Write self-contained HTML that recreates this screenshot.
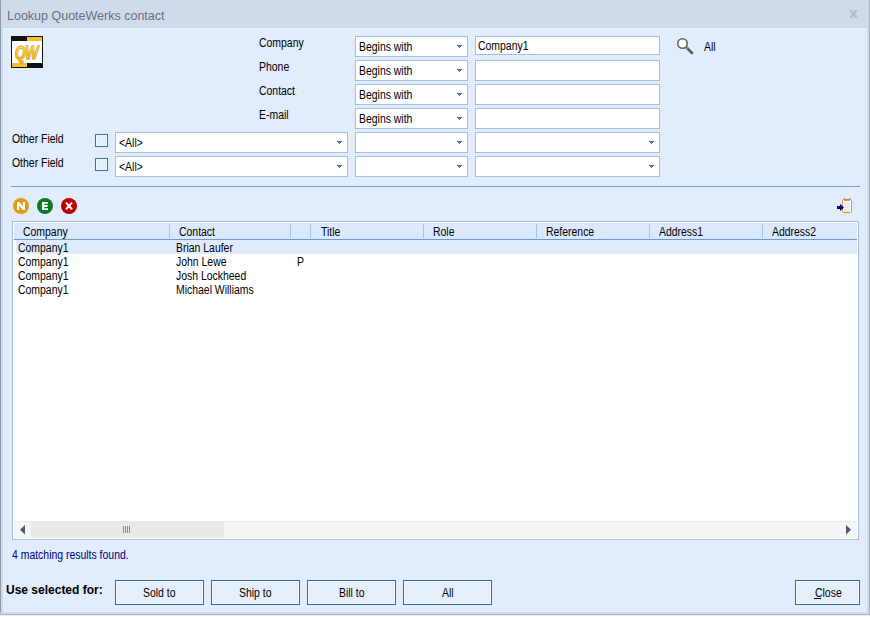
<!DOCTYPE html>
<html><head><meta charset="utf-8">
<style>
*{margin:0;padding:0;box-sizing:border-box}
html,body{width:870px;height:617px;overflow:hidden;background:#fff}
body{position:relative;font-family:"Liberation Sans",sans-serif;font-size:12px;line-height:14px;color:#000}
.a{position:absolute;white-space:nowrap}
.t{position:absolute;white-space:nowrap;font-size:12px;line-height:14px;transform:scaleX(0.87);transform-origin:0 0}
.r{position:absolute}
.sel{position:absolute;background:#fff;border:1px solid #A7BEDD;height:21px}
.arr{position:absolute;top:8px;width:5px;height:3px;background:linear-gradient(#3F6DAE,#3F6DAE) 0 0/5px 1px no-repeat,linear-gradient(#3F6DAE,#3F6DAE) 1px 1px/3px 1px no-repeat,linear-gradient(#5A80B8,#5A80B8) 2px 2px/1px 1px no-repeat}
.inp{position:absolute;background:#fff;border:1px solid #A7BEDD;height:21px}
.cb{position:absolute;width:13px;height:13px;border:1px solid #3670B2;background:#E3EEFB;box-shadow:inset 0 0 0 1px #F2F7FE}
.btn{position:absolute;top:580px;height:25px;border:1px solid #3569A4;background:#E5EFFC;box-shadow:inset 0 0 0 1px #F6FAFF}
.sep{position:absolute;top:224px;width:1px;height:14px;background:#A4C4EC}
</style></head><body>
<!-- window frame -->
<div class="r" style="left:0;top:0;width:870px;height:615px;background:#CFDBEA"></div>
<div class="r" style="left:3px;top:28px;width:864px;height:584px;background:#E1ECFC"></div>
<div class="r" style="left:1px;top:27px;width:868px;height:1px;background:#C8D7E9"></div>
<div class="r" style="left:3px;top:28px;width:864px;height:1px;background:#E7F0FE"></div>
<div class="r" style="left:3px;top:28px;width:1px;height:584px;background:#E7F0FE"></div>
<div class="r" style="left:0;top:0;width:1px;height:612px;background:#8E9CB1"></div><div class="r" style="left:0;top:612px;width:1px;height:2px;background:#BDC4CE"></div>
<div class="r" style="left:869px;top:0;width:1px;height:615px;background:#A9B2BF"></div>
<div class="r" style="left:0;top:614px;width:870px;height:1px;background:#AFB7C2"></div>
<div class="r" style="left:0;top:615px;width:870px;height:1px;background:#EDEDED"></div>

<div class="a" style="left:7px;top:9px;font-size:12.5px;color:#6C6A88">Lookup QuoteWerks contact</div>
<svg class="r" style="left:849px;top:10px" width="9" height="8" viewBox="0 0 9 8">
<polygon points="0,0 3.1,0 4.5,2.3 5.9,0 9,0 6.2,4 9,8 5.9,8 4.5,5.7 3.1,8 0,8 2.8,4" fill="#B3BFCD"/>
</svg>

<!-- logo -->
<svg class="r" style="left:11px;top:36px" width="32" height="32" viewBox="0 0 32 32">
<rect x="0" y="0" width="32" height="32" fill="#111"/>
<rect x="1" y="5" width="30" height="22" fill="#fff"/>
<rect x="16" y="1" width="15" height="4" fill="#F5C030"/>
<rect x="1" y="27" width="15" height="4" fill="#F5C030"/>
<defs><linearGradient id="qg" x1="0" y1="0" x2="0" y2="1"><stop offset="0" stop-color="#FFD84E"/><stop offset="1" stop-color="#F0A810"/></linearGradient></defs>
<text x="0" y="0" transform="translate(15.3 23) scale(0.84 1.03)" font-family="Liberation Sans" font-weight="bold" font-style="italic" font-size="17" fill="url(#qg)" stroke="#B8860B" stroke-width="0.8" paint-order="stroke" text-anchor="middle" letter-spacing="-0.8">QW</text>
</svg>

<!-- labels -->
<div class="t" style="left:259px;top:36px">Company</div>
<div class="t" style="left:259px;top:60px">Phone</div>
<div class="t" style="left:259px;top:84px">Contact</div>
<div class="t" style="left:259px;top:108px">E-mail</div>

<div class="sel" style="left:355px;top:36px;width:113px"><div class="t" style="left:3px;top:3px">Begins with</div><div class="arr" style="left:101px"></div></div>
<div class="sel" style="left:355px;top:60px;width:113px"><div class="t" style="left:3px;top:3px">Begins with</div><div class="arr" style="left:101px"></div></div>
<div class="sel" style="left:355px;top:84px;width:113px"><div class="t" style="left:3px;top:3px">Begins with</div><div class="arr" style="left:101px"></div></div>
<div class="sel" style="left:355px;top:108px;width:113px"><div class="t" style="left:3px;top:3px">Begins with</div><div class="arr" style="left:101px"></div></div>

<div class="inp" style="left:475px;top:36px;width:185px;height:19px"><div class="t" style="left:2px;top:2px">Company1</div></div>
<div class="inp" style="left:475px;top:60px;width:185px"></div>
<div class="inp" style="left:475px;top:84px;width:185px"></div>
<div class="inp" style="left:475px;top:108px;width:185px"></div>

<!-- search -->
<svg class="r" style="left:672px;top:34px" width="26" height="24" viewBox="0 0 26 24">
<line x1="14.5" y1="13.5" x2="20" y2="19" stroke="#6B5C56" stroke-width="2.8" stroke-linecap="round"/>
<line x1="13.4" y1="12.4" x2="15.6" y2="14.6" stroke="#48A6DE" stroke-width="2.4"/>
<circle cx="10.5" cy="9.5" r="4.7" fill="#fff" stroke="#6B5C56" stroke-width="1.6"/>
</svg>
<div class="t" style="left:704px;top:40px">All</div>

<!-- other fields -->
<div class="t" style="left:12px;top:132px">Other Field</div>
<div class="t" style="left:12px;top:156px">Other Field</div>
<div class="cb" style="left:95px;top:134px"></div>
<div class="cb" style="left:95px;top:158px"></div>
<div class="sel" style="left:115px;top:132px;width:233px"><div class="t" style="left:3px;top:3px">&lt;All&gt;</div><div class="arr" style="left:221px"></div></div>
<div class="sel" style="left:115px;top:156px;width:233px"><div class="t" style="left:3px;top:3px">&lt;All&gt;</div><div class="arr" style="left:221px"></div></div>
<div class="sel" style="left:355px;top:132px;width:113px"><div class="arr" style="left:101px"></div></div>
<div class="sel" style="left:355px;top:156px;width:113px"><div class="arr" style="left:101px"></div></div>
<div class="sel" style="left:475px;top:132px;width:185px"><div class="arr" style="left:173px"></div></div>
<div class="sel" style="left:475px;top:156px;width:185px"><div class="arr" style="left:173px"></div></div>

<div class="r" style="left:11px;top:186px;width:849px;height:1px;background:#7D9CB6"></div>

<!-- N E X -->
<svg class="r" style="left:13px;top:198px" width="64" height="16" viewBox="0 0 64 16">
<circle cx="8" cy="8" r="8" fill="#E39B0E"/>
<circle cx="32" cy="8" r="8" fill="#0C7A22"/>
<circle cx="56" cy="8" r="8" fill="#C00000"/>
<polygon fill="#fff" points="4,4 6.4,4 9.8,8.6 9.8,4 12,4 12,12 9.6,12 6.2,7.4 6.2,12 4,12"/>
<polygon fill="#fff" points="29,4 35,4 35,5.8 31.2,5.8 31.2,7.1 34.5,7.1 34.5,8.9 31.2,8.9 31.2,10.2 35,10.2 35,12 29,12"/>
<path d="M53 4.6 L59 11.4 M59 4.6 L53 11.4" stroke="#fff" stroke-width="2.1"/>
</svg>

<!-- clipboard icon -->
<svg class="r" style="left:836px;top:196px" width="18" height="18" viewBox="0 0 18 18">
<rect x="6.5" y="3.5" width="9" height="13" rx="1" fill="#fff" stroke="#E8990C" stroke-width="1"/>
<rect x="8" y="6" width="6" height="9" fill="#EDEDF0"/>
<rect x="8" y="15" width="6" height="1" fill="#F4DCD6"/>
<rect x="7.6" y="2" width="1.4" height="1.4" fill="#E8990C"/>
<rect x="13" y="2" width="1.4" height="1.4" fill="#E8990C"/>
<rect x="9" y="2" width="4" height="1.2" fill="#EADDDD"/>
<rect x="8" y="3.2" width="6" height="1.6" fill="#8C8C8C"/>
<rect x="1" y="10" width="4" height="3" fill="#00008E"/>
<polygon points="4,8 8,11.5 4,15" fill="#00008E"/>
</svg>

<!-- grid -->
<div class="r" style="left:12px;top:221px;width:847px;height:319px;background:#fff;border:1px solid #A6BEDE"></div>
<div class="r" style="left:14px;top:223px;width:843px;height:16px;background:#DCE9FC"></div>
<div class="r" style="left:14px;top:239px;width:843px;height:1px;background:#6D99CF"></div>
<div class="sep" style="left:169px"></div>
<div class="sep" style="left:290px"></div>
<div class="sep" style="left:310px"></div>
<div class="sep" style="left:423px"></div>
<div class="sep" style="left:536px"></div>
<div class="sep" style="left:649px"></div>
<div class="sep" style="left:762px"></div>
<div class="t" style="left:23px;top:225px">Company</div>
<div class="t" style="left:179px;top:225px">Contact</div>
<div class="t" style="left:321px;top:225px">Title</div>
<div class="t" style="left:433px;top:225px">Role</div>
<div class="t" style="left:546px;top:225px">Reference</div>
<div class="t" style="left:659px;top:225px">Address1</div>
<div class="t" style="left:772px;top:225px">Address2</div>

<div class="r" style="left:16px;top:240px;width:841px;height:14px;background:#DFEBFC"></div>
<div class="t" style="left:18px;top:241px">Company1</div>
<div class="t" style="left:176px;top:241px">Brian Laufer</div>
<div class="t" style="left:18px;top:255px">Company1</div>
<div class="t" style="left:176px;top:255px">John Lewe</div>
<div class="t" style="left:297px;top:255px">P</div>
<div class="t" style="left:18px;top:269px">Company1</div>
<div class="t" style="left:176px;top:269px">Josh Lockheed</div>
<div class="t" style="left:18px;top:283px">Company1</div>
<div class="t" style="left:176px;top:283px">Michael Williams</div>

<!-- hscroll -->
<div class="r" style="left:14px;top:521px;width:843px;height:17px;background:#F5F5F5;border-top:1px solid #EAEAEA"></div>
<div class="r" style="left:31px;top:521px;width:193px;height:17px;background:#E8E8E8"></div>
<svg class="r" style="left:19px;top:524px" width="8" height="12" viewBox="0 0 8 12"><polygon points="6,1 6,10.5 1,5.75" fill="#48577A"/></svg>
<svg class="r" style="left:845px;top:524px" width="8" height="12" viewBox="0 0 8 12"><polygon points="1,1 1,10.5 6,5.75" fill="#48577A"/></svg>
<div class="r" style="left:123px;top:526px;width:1px;height:7px;background:#8A8A8A"></div>
<div class="r" style="left:125px;top:526px;width:1px;height:7px;background:#8A8A8A"></div>
<div class="r" style="left:127px;top:526px;width:1px;height:7px;background:#8A8A8A"></div>
<div class="r" style="left:129px;top:526px;width:1px;height:7px;background:#8A8A8A"></div>

<div class="t" style="left:12px;top:548px;color:#000080">4 matching results found.</div>

<div class="a" style="left:6px;top:583px;font-weight:bold">Use selected for:</div>
<div class="btn" style="left:115px;width:89px"></div>
<div class="btn" style="left:211px;width:89px"></div>
<div class="btn" style="left:307px;width:89px"></div>
<div class="btn" style="left:403px;width:89px"></div>
<div class="btn" style="left:795px;width:65px"></div>
<div class="t" style="left:143px;top:586px">Sold to</div>
<div class="t" style="left:239px;top:586px">Ship to</div>
<div class="t" style="left:339px;top:586px">Bill to</div>
<div class="t" style="left:442px;top:586px">All</div>
<div class="t" style="left:815px;top:586px">Close</div>
<div class="r" style="left:814px;top:598px;width:7px;height:1px;background:#000"></div>
</body></html>
